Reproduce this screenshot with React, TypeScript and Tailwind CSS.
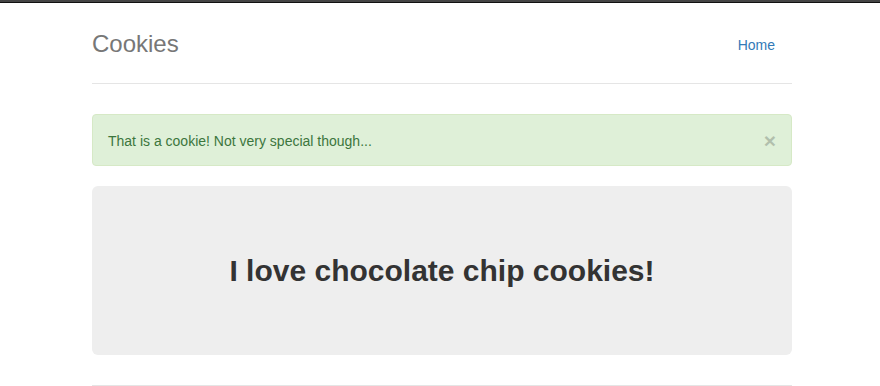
import React from 'react';

const App: React.FC = () => {
  return (
    <div className="min-h-screen bg-white text-[14px] leading-[20px] text-[#333] font-['Liberation_Sans',Arial,sans-serif]">
      {/* window edge */}
      <div className="h-[3px] bg-[#444] border-b border-[#111]" />

      <div className="w-[700px] ml-[92px] pt-[20px]">
        {/* Header */}
        <div className="flex items-center justify-between pb-[20px] border-b border-[#e5e5e5] mb-[30px]">
          <h3 className="text-[24px] leading-[40px] text-[#777] pt-[1px] -mb-[1px]">Cookies</h3>
          <nav>
            <a href="#" className="block pl-[15px] pr-[17px] pt-[12px] pb-[8px] text-[#337ab7] rounded">Home</a>
          </nav>
        </div>

        {/* Alert */}
        <div className="flex items-center justify-between px-[15px] pt-[16px] pb-[14px] bg-[#dff0d8] border border-[#d6e9c6] rounded text-[#3c763d] mb-[20px]">
          <span>That is a cookie! Not very special though...</span>
          <button className="text-[21px] leading-[20px] font-bold text-black opacity-20">×</button>
        </div>

        {/* Jumbotron */}
        <div className="h-[169px] bg-[#eee] rounded-md flex items-center justify-center mb-[30px]">
          <h1 className="text-[30px] font-bold text-[#333] pt-[1px]">I love chocolate chip cookies!</h1>
        </div>

        {/* Footer */}
        <div className="border-t border-[#e5e5e5]" />
      </div>
    </div>
  );
};

export default App;
